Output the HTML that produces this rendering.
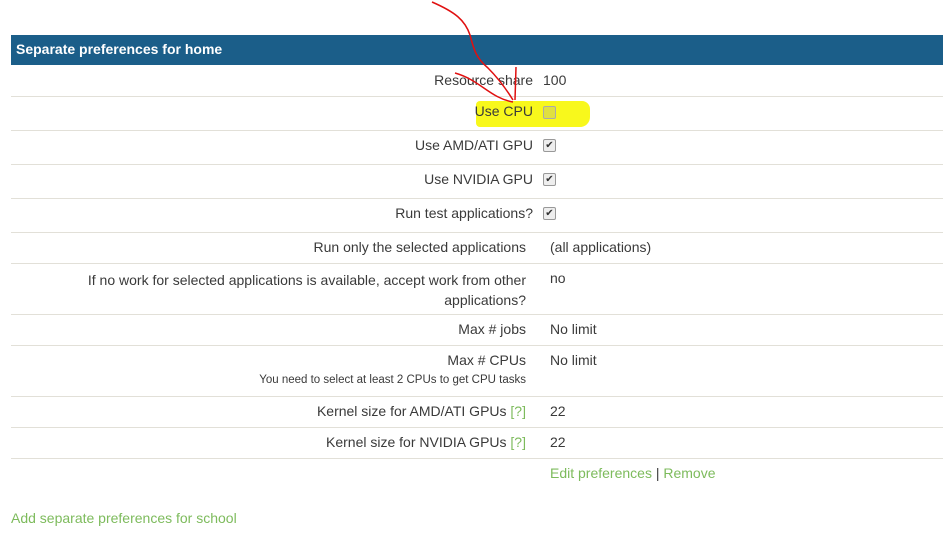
<!DOCTYPE html>
<html><head><style>
body{margin:0;width:943px;height:538px;background:#fff;font-family:"Liberation Sans",sans-serif;font-size:14px;color:#3a3a3a;position:relative;overflow:hidden}
.a{position:absolute;white-space:nowrap}
.r{text-align:right}
.l{position:absolute;left:11px;width:932px;height:1px;background:#e2e0d8}
.g{color:#7dbb5c}
.cb{position:absolute;width:11px;height:11px;border:1px solid #999;border-radius:2px;background:#eee;font-size:10px;line-height:11px;text-align:center;color:#333}
</style></head><body>
<div class="a" style="left:476px;top:101px;width:114px;height:26px;background:#f8f81c;border-radius:4px 8px 10px 4px"></div>
<div class="a" style="left:11px;top:35px;width:932px;height:30px;background:#1b5e89"></div>
<div class="a" style="left:16px;top:41px;color:#fff;font-weight:bold;font-size:14px">Separate preferences for home</div>

<div class="a r" style="right:410px;top:72px">Resource share</div><div class="a" style="left:543px;top:72px">100</div>
<div class="l" style="top:96px"></div>
<div class="a r" style="right:410px;top:103px">Use CPU</div><div class="cb" style="left:543px;top:106px;background:#e0e040;border-color:#aaa"></div>
<div class="l" style="top:130px"></div>
<div class="a r" style="right:410px;top:137px">Use AMD/ATI GPU</div><div class="cb" style="left:543px;top:139px">✔</div>
<div class="l" style="top:164px"></div>
<div class="a r" style="right:410px;top:171px">Use NVIDIA GPU</div><div class="cb" style="left:543px;top:173px">✔</div>
<div class="l" style="top:198px"></div>
<div class="a r" style="right:410px;top:205px">Run test applications?</div><div class="cb" style="left:543px;top:207px">✔</div>
<div class="l" style="top:232px"></div>
<div class="a r" style="right:417px;top:239px">Run only the selected applications</div><div class="a" style="left:550px;top:239px">(all applications)</div>
<div class="l" style="top:263px"></div>
<div class="a r" style="right:417px;top:270px;line-height:20px">If no work for selected applications is available, accept work from other<br>applications?</div><div class="a" style="left:550px;top:270px">no</div>
<div class="l" style="top:314px"></div>
<div class="a r" style="right:417px;top:321px">Max # jobs</div><div class="a" style="left:550px;top:321px">No limit</div>
<div class="l" style="top:345px"></div>
<div class="a r" style="right:417px;top:352px">Max # CPUs</div><div class="a" style="left:550px;top:352px">No limit</div>
<div class="a r" style="right:417px;top:374px;font-size:11.5px">You need to select at least 2 CPUs to get CPU tasks</div>
<div class="l" style="top:396px"></div>
<div class="a r" style="right:417px;top:403px">Kernel size for AMD/ATI GPUs <span class="g">[?]</span></div><div class="a" style="left:550px;top:403px">22</div>
<div class="l" style="top:427px"></div>
<div class="a r" style="right:417px;top:434px">Kernel size for NVIDIA GPUs <span class="g">[?]</span></div><div class="a" style="left:550px;top:434px">22</div>
<div class="l" style="top:458px"></div>
<div class="a" style="left:550px;top:465px"><span class="g">Edit preferences</span> | <span class="g">Remove</span></div>
<div class="a g" style="left:11px;top:510px">Add separate preferences for school</div>
<svg class="a" style="left:0;top:0" width="943" height="538"><g fill="none" stroke="#e01010" stroke-width="1.5">
<path d="M432,2 C455,12 465,20 470,35 C474,50 476,58 488,68 C500,80 508,92 513,100"/>
<path d="M455,73 C480,80 490,98 513,102"/>
<path d="M516,67 L515,100"/></g></svg>
</body></html>
